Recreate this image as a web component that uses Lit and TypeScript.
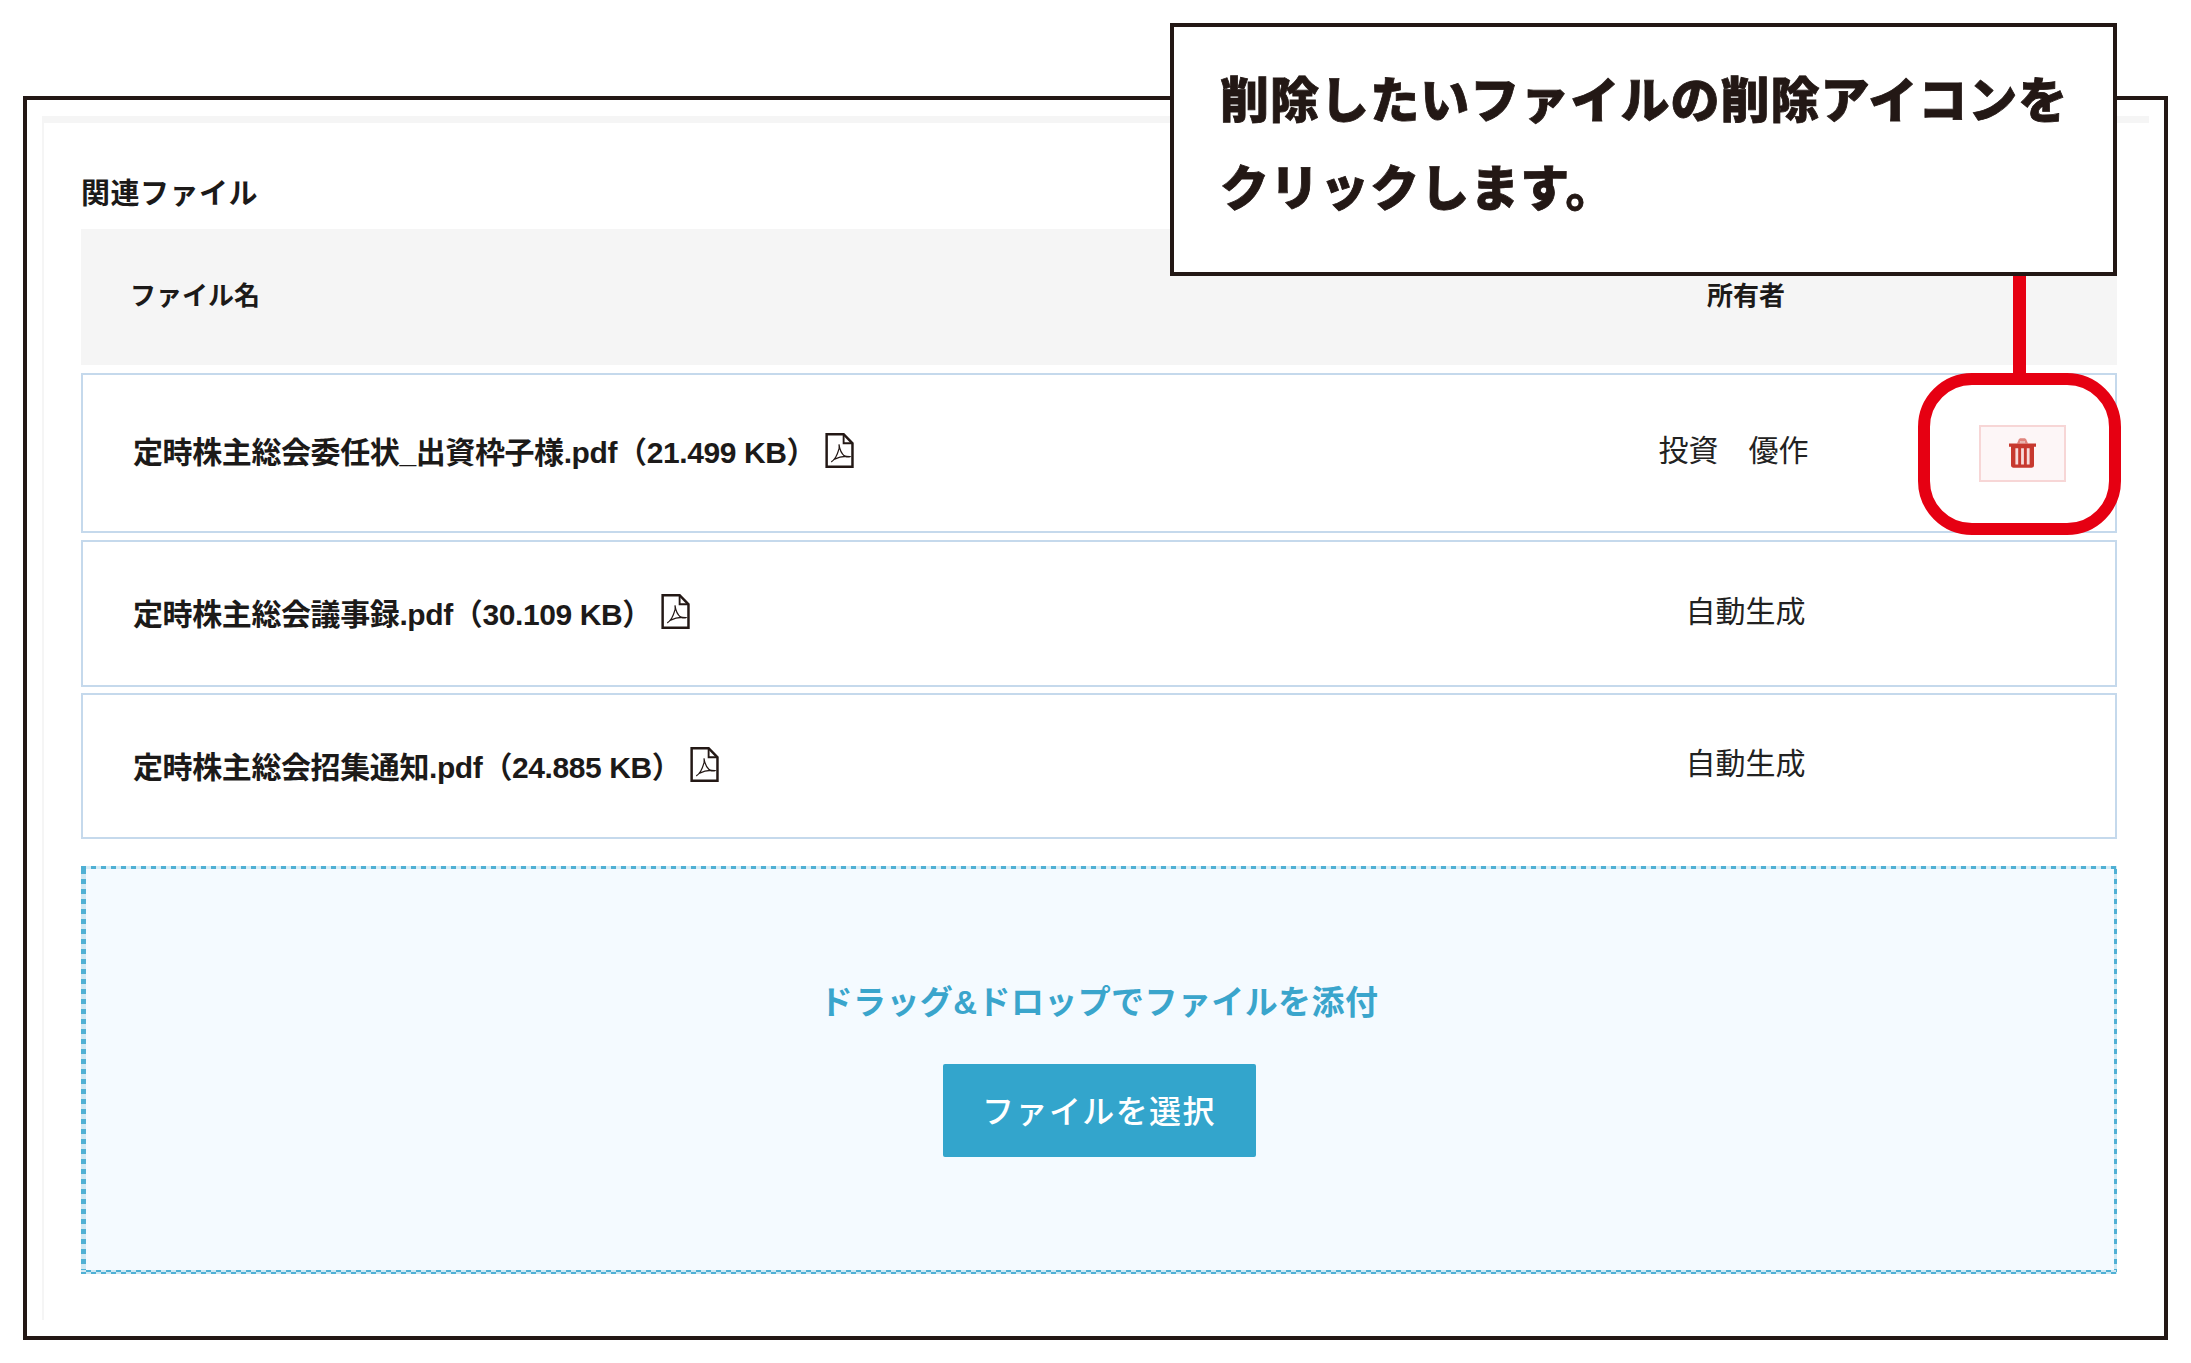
import { LitElement, html, css, svg } from "lit";
import { customElement } from "lit/decorators.js";

const pdfIcon = svg`<svg class="pdf" viewBox="0 0 28 34" width="29" height="35" fill="none" stroke="#231815">
  <path d="M1.500 1.200H18L26.600 10V32.800H1.500Z" stroke-width="2.400" stroke-linejoin="miter"/>
  <path d="M18 1.200V10H26.600" stroke-width="1.800"/>
  <path d="M6 28C9 26.500 12 21 13.500 15.500C13.800 13.500 13.700 12 13.500 11C14 15 16 20 19 22.500C21 23.300 23 23.500 24 23C20 22.300 13 23.500 8 26" stroke-width="1.200"/>
</svg>`;

const trashIcon = svg`<svg class="trash" viewBox="0 0 27 30" width="27" height="30">
  <path fill="#e0857e" d="M8 5.500L9.600 1.800C10 .8 10.800.3 11.800.3H15.200C16.200.3 17 .8 17.400 1.800L19 5.500H16.300L15.400 3H11.600L10.700 5.500Z"/>
  <path fill="#e9b3ad" d="M11.600 3H15.400L16.300 5.500H10.700Z"/>
  <path fill="#c7392f" d="M0 5.500H27V8.800H25V27.300C25 28.800 24 29.800 22.500 29.800H4.500C3 29.800 2 28.800 2 27.300V8.800H0Z"/>
  <path fill="#f7dcdc" d="M6.400 10.300H9.200V26.500H6.400ZM12.100 10.300H14.900V26.500H12.100ZM17.800 10.300H20.600V26.500H17.800Z"/>
</svg>`;

interface FileRow {
  name: string;
  owner: string;
  cls: string;
  deletable?: boolean;
}

const rows: FileRow[] = [
  { name: "定時株主総会委任状_出資枠子様.pdf（21.499 KB）", owner: "投資　優作", cls: "r1", deletable: true },
  { name: "定時株主総会議事録.pdf（30.109 KB）", owner: "自動生成", cls: "r2" },
  { name: "定時株主総会招集通知.pdf（24.885 KB）", owner: "自動生成", cls: "r3" },
];

@customElement("app-root")
export class AppRoot extends LitElement {
  static styles = css`
    :host {
      display: block;
      position: relative;
      width: 2191px;
      height: 1363px;
      background: #fff;
      overflow: hidden;
      box-sizing: border-box;
      padding: 96px 23px 23px;
      font-family: "Liberation Sans", "Noto Sans CJK JP", sans-serif;
      color: #1c1a19;
    }
    * { box-sizing: border-box; }
    .frame {
      border: 4px solid #231815;
      padding: 16px 15px;
    }
    .panel {
      border-top: 7px solid #f5f5f5;
      border-left: 2px solid #f5f5f5;
      padding: 51px 32px 46px 37px;
    }
    .label {
      font-size: 29px;
      font-weight: 700;
      line-height: 40px;
      letter-spacing: 0.5px;
      margin-bottom: 15px;
    }
    .head, .row {
      display: grid;
      align-items: center;
    }
    .head {
      grid-template-columns: 1fr 362px 190px;
      height: 136px;
      background: #f5f5f5;
      padding: 0 0 8px 49px;
      font-size: 26px;
      font-weight: 700;
      margin-bottom: 8px;
    }
    .owner { text-align: center; }
    .row {
      grid-template-columns: 1fr 360px 188px;
      border: 2px solid #c5d9ec;
      padding-left: 50px;
    }
    .r1 { height: 160px; margin-bottom: 7px; }
    .r2 { height: 147px; margin-bottom: 6px; }
    .r3 { height: 146px; margin-bottom: 27px; }
    .name {
      display: flex;
      align-items: center;
      gap: 9px;
      font-size: 30px;
      font-weight: 700;
      white-space: nowrap;
      letter-spacing: -0.4px;
      padding-bottom: 4px;
    }
    .r1 .name { padding-bottom: 6px; }
    .r3 .name { padding-bottom: 3px; }
    .pdf { flex: none; }
    .cell-owner {
      text-align: center;
      font-size: 30px;
      color: #222;
      padding: 0 3px 10px 0;
    }
    .r1 .cell-owner { padding-right: 27px; }
    .act { display: flex; justify-content: center; padding-left: 2px; }
    .del {
      width: 87px;
      height: 57px;
      border: 2px solid #f7d6d6;
      background: #fdf6f7;
      display: flex;
      align-items: center;
      justify-content: center;
      padding: 0;
    }
    .zone {
      height: 408px;
      padding-top: 115px;
      display: flex;
      flex-direction: column;
      align-items: center;
      background-color: #f4faff;
      background-image:
        repeating-linear-gradient(90deg, #4fb0d4 0 5px, #d5ebf5 5px 10px),
        repeating-linear-gradient(90deg, #4fb0d4 0 5px, #cfe8f3 5px 10px),
        repeating-linear-gradient(90deg, #cfe8f3 0 5px, #4fb0d4 5px 10px),
        repeating-linear-gradient(0deg, #4fb0d4 0 5px, #cfe8f3 5px 10px),
        repeating-linear-gradient(0deg, #4fb0d4 0 5px, #cfe8f3 5px 10px);
      background-size: 100% 3px, 100% 2px, 100% 2px, 5px 100%, 3px 100%;
      background-position: 0 0, 0 100%, 0 calc(100% - 2px), 0 0, 100% 0;
      background-repeat: no-repeat;
    }
    .zone-text {
      font-size: 33px;
      font-weight: 700;
      line-height: 44px;
      color: #3aa5cc;
      letter-spacing: 0.4px;
      margin-bottom: 39px;
    }
    .pick {
      width: 313px;
      height: 93px;
      border: none;
      border-radius: 2px;
      background: #33a5cc;
      color: #fff;
      font: 500 32px "Liberation Sans", "Noto Sans CJK JP", sans-serif;
      letter-spacing: 1.4px;
      padding: 0 0 3px;
    }
    .callout {
      position: absolute;
      left: 1170px;
      top: 23px;
      width: 947px;
      height: 253px;
      border: 4px solid #231815;
      background: #fff;
      padding: 30px 0 0 46px;
      font-size: 49px;
      font-weight: 900;
      line-height: 88px;
      color: #231815;
      letter-spacing: 1.05px;
      -webkit-text-stroke: 0.8px #231815;
      white-space: nowrap;
    }
    .connector {
      position: absolute;
      left: 2013px;
      top: 276px;
      width: 13px;
      height: 100px;
      background: #e60012;
    }
    .ring {
      position: absolute;
      left: 1918px;
      top: 373px;
      width: 203px;
      height: 162px;
      border: 12px solid #e60012;
      border-radius: 54px;
    }
  `;

  render() {
    return html`
      <div class="frame">
        <div class="panel">
          <div class="label">関連ファイル</div>
          <div class="head">
            <div>ファイル名</div>
            <div class="owner">所有者</div>
            <div></div>
          </div>
          ${rows.map(
            (r) => html`
              <div class="row ${r.cls}">
                <div class="name"><span>${r.name}</span>${pdfIcon}</div>
                <div class="cell-owner">${r.owner}</div>
                <div class="act">
                  ${r.deletable ? html`<button class="del" aria-label="削除">${trashIcon}</button>` : ""}
                </div>
              </div>
            `
          )}
          <div class="zone">
            <div class="zone-text">ドラッグ&ドロップでファイルを添付</div>
            <button class="pick">ファイルを選択</button>
          </div>
        </div>
      </div>
      <div class="connector"></div>
      <div class="ring"></div>
      <div class="callout">削除したいファイルの削除アイコンを<br />クリックします。</div>
    `;
  }
}
